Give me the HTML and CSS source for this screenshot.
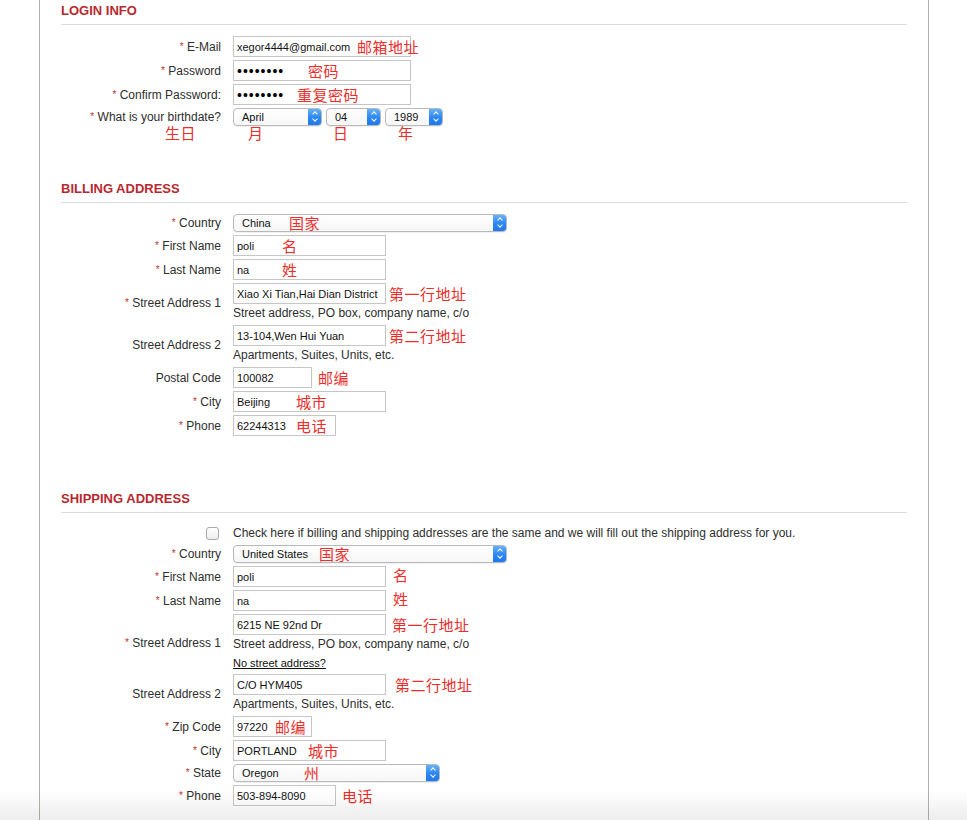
FILE: index.html
```html
<!DOCTYPE html>
<html lang="en">

<head>
    <meta charset="UTF-8">
    <meta name="viewport" content="width=device-width, initial-scale=1.0">
    <title>Account Registration</title>
    <link rel="stylesheet" href="styles.css">
</head>

<body>
    <div class="page">
        <form class="reg-form">
            <!-- 登录信息 -->
            <section class="section">
                <h2 class="section-title">LOGIN INFO</h2>
                <div class="row">
                    <label class="row-label"><em>*</em> E-Mail</label>
                    <div class="row-field">
                        <input class="text w-long" type="text" value="xegor4444@gmail.com">
                    </div>
                    <span class="note note-email">邮箱地址</span>
                </div>
                <div class="row">
                    <label class="row-label"><em>*</em> Password</label>
                    <div class="row-field">
                        <input class="text w-long" type="password" value="abcdefgh">
                    </div>
                    <span class="note note-pwd">密码</span>
                </div>
                <div class="row">
                    <label class="row-label"><em>*</em> Confirm Password:</label>
                    <div class="row-field">
                        <input class="text w-long" type="password" value="abcdefgh">
                    </div>
                    <span class="note note-pwd2">重复密码</span>
                </div>
                <div class="row row-select">
                    <label class="row-label"><em>*</em> What is your birthdate?</label>
                    <div class="row-field birth">
                        <div class="select w-month">
                            <select><option>April</option></select>
                            <span class="select-btn"></span>
                        </div>
                        <div class="select w-day">
                            <select><option>04</option></select>
                            <span class="select-btn"></span>
                        </div>
                        <div class="select w-year">
                            <select><option>1989</option></select>
                            <span class="select-btn"></span>
                        </div>
                    </div>
                    <span class="note note-birth">生日</span>
                    <span class="note note-month">月</span>
                    <span class="note note-day">日</span>
                    <span class="note note-year">年</span>
                </div>
            </section>

            <!-- 账单地址 -->
            <section class="section">
                <h2 class="section-title">BILLING ADDRESS</h2>
                <div class="row row-select">
                    <label class="row-label"><em>*</em> Country</label>
                    <div class="row-field">
                        <div class="select w-country">
                            <select><option>China</option></select>
                            <span class="select-btn"></span>
                        </div>
                    </div>
                    <span class="note note-b-country">国家</span>
                </div>
                <div class="row">
                    <label class="row-label"><em>*</em> First Name</label>
                    <div class="row-field"><input class="text w-mid" type="text" value="poli"></div>
                    <span class="note note-b-name">名</span>
                </div>
                <div class="row">
                    <label class="row-label"><em>*</em> Last Name</label>
                    <div class="row-field"><input class="text w-mid" type="text" value="na"></div>
                    <span class="note note-b-name">姓</span>
                </div>
                <div class="row">
                    <label class="row-label"><em>*</em> Street Address 1</label>
                    <div class="row-field">
                        <input class="text w-mid" type="text" value="Xiao Xi Tian,Hai Dian District">
                        <p class="hint">Street address, PO box, company name, c/o</p>
                    </div>
                    <span class="note note-b-street">第一行地址</span>
                </div>
                <div class="row">
                    <label class="row-label">Street Address 2</label>
                    <div class="row-field">
                        <input class="text w-mid" type="text" value="13-104,Wen Hui Yuan">
                        <p class="hint">Apartments, Suites, Units, etc.</p>
                    </div>
                    <span class="note note-b-street">第二行地址</span>
                </div>
                <div class="row">
                    <label class="row-label">Postal Code</label>
                    <div class="row-field"><input class="text w-zip" type="text" value="100082"></div>
                    <span class="note note-b-zip">邮编</span>
                </div>
                <div class="row">
                    <label class="row-label"><em>*</em> City</label>
                    <div class="row-field"><input class="text w-mid" type="text" value="Beijing"></div>
                    <span class="note note-b-city">城市</span>
                </div>
                <div class="row">
                    <label class="row-label"><em>*</em> Phone</label>
                    <div class="row-field"><input class="text w-phone" type="text" value="62244313"></div>
                    <span class="note note-b-city">电话</span>
                </div>
            </section>

            <!-- 收货地址 -->
            <section class="section">
                <h2 class="section-title">SHIPPING ADDRESS</h2>
                <div class="row row-check">
                    <div class="row-label"><input class="check" type="checkbox" id="same_addr"></div>
                    <label class="row-field check-text" for="same_addr">Check here if billing and shipping addresses are the same and we will fill out the shipping address for you.</label>
                </div>
                <div class="row row-select">
                    <label class="row-label"><em>*</em> Country</label>
                    <div class="row-field">
                        <div class="select w-country">
                            <select><option>United States</option></select>
                            <span class="select-btn"></span>
                        </div>
                    </div>
                    <span class="note note-s-country">国家</span>
                </div>
                <div class="row">
                    <label class="row-label"><em>*</em> First Name</label>
                    <div class="row-field"><input class="text w-mid" type="text" value="poli"></div>
                    <span class="note note-s-name">名</span>
                </div>
                <div class="row">
                    <label class="row-label"><em>*</em> Last Name</label>
                    <div class="row-field"><input class="text w-mid" type="text" value="na"></div>
                    <span class="note note-s-name">姓</span>
                </div>
                <div class="row">
                    <label class="row-label"><em>*</em> Street Address 1</label>
                    <div class="row-field">
                        <input class="text w-mid" type="text" value="6215 NE 92nd Dr">
                        <p class="hint">Street address, PO box, company name, c/o</p>
                        <a class="no-street" href="#">No street address?</a>
                    </div>
                    <span class="note note-s-street1">第一行地址</span>
                </div>
                <div class="row">
                    <label class="row-label">Street Address 2</label>
                    <div class="row-field">
                        <input class="text w-mid" type="text" value="C/O HYM405">
                        <p class="hint">Apartments, Suites, Units, etc.</p>
                    </div>
                    <span class="note note-s-street2">第二行地址</span>
                </div>
                <div class="row">
                    <label class="row-label"><em>*</em> Zip Code</label>
                    <div class="row-field"><input class="text w-zip" type="text" value="97220"></div>
                    <span class="note note-s-zip">邮编</span>
                </div>
                <div class="row">
                    <label class="row-label"><em>*</em> City</label>
                    <div class="row-field"><input class="text w-mid" type="text" value="PORTLAND"></div>
                    <span class="note note-s-city">城市</span>
                </div>
                <div class="row row-select">
                    <label class="row-label"><em>*</em> State</label>
                    <div class="row-field">
                        <div class="select w-state">
                            <select><option>Oregon</option></select>
                            <span class="select-btn"></span>
                        </div>
                    </div>
                    <span class="note note-s-state">州</span>
                </div>
                <div class="row">
                    <label class="row-label"><em>*</em> Phone</label>
                    <div class="row-field"><input class="text w-phone" type="text" value="503-894-8090"></div>
                    <span class="note note-s-phone">电话</span>
                </div>
            </section>
        </form>
    </div>
    <div class="bottom-fade"></div>
</body>

</html>
```

FILE: styles.css
```css
* {
    margin: 0;
    padding: 0;
    box-sizing: border-box;
}

body {
    background-color: #fff;
    font-family: "Liberation Sans", Arial, sans-serif;
    font-size: 12px;
    color: #333;
}

.page {
    width: 890px;
    min-height: 820px;
    margin-left: 39px;
    padding: 0 21px;
    border-left: 1px solid #b3b1ac;
    border-right: 1px solid #b3b1ac;
}

/* 每一块 */
.section {
    margin-bottom: 52px;
}

.section-title {
    height: 25px;
    padding-top: 3px;
    font-size: 13px;
    line-height: 15px;
    font-weight: bold;
    color: #b8292f;
    border-bottom: 1px solid #dcdcdc;
    margin-bottom: 11px;
}

/* 表单行 */
.row {
    position: relative;
    display: grid;
    grid-template-columns: 160px auto;
    column-gap: 12px;
    align-items: center;
    margin-bottom: 3px;
}

.row-label {
    text-align: right;
    font-size: 12px;
    color: #2e2e2e;
}

.row-label em {
    font-style: normal;
    font-size: 10px;
    color: #c0322c;
    vertical-align: 1px;
}

.row-field {
    display: flex;
    flex-direction: column;
    align-items: flex-start;
}

.text {
    height: 21px;
    padding: 0 3px;
    border: 1px solid #c6c6c6;
    font-family: "Liberation Sans", Arial, sans-serif;
    font-size: 11px;
    color: #111;
    background: #fff;
    outline: none;
}

.text[type="password"] {
    font-size: 14px;
    letter-spacing: 1px;
    color: #000;
}

.w-long { width: 178px; }
.w-mid { width: 153px; }
.w-zip { width: 79px; }
.w-phone { width: 103px; }

.hint {
    line-height: 18px;
    font-size: 12px;
    color: #2e2e2e;
}

.no-street {
    margin-top: 2px;
    line-height: 16px;
    font-size: 11px;
    color: #111;
}

/* 下拉框 */
.select {
    position: relative;
    display: flex;
    height: 18px;
    border: 1px solid #b9b9b9;
    border-radius: 4px;
    background: linear-gradient(#fff, #f6f6f6);
    box-shadow: 0 1px 0 rgba(0, 0, 0, 0.06);
    overflow: hidden;
}

.select select {
    flex: 1;
    min-width: 0;
    appearance: none;
    -webkit-appearance: none;
    border: none;
    outline: none;
    background: transparent;
    padding-left: 8px;
    font-family: "Liberation Sans", Arial, sans-serif;
    font-size: 11px;
    color: #111;
}

.select-btn {
    width: 14px;
    margin: -1px -1px -1px 0;
    background: linear-gradient(#6cb6fb, #2a86f2 55%, #1f77ea);
    border-radius: 0 4px 4px 0;
    position: relative;
}

.select-btn::before,
.select-btn::after {
    content: "";
    position: absolute;
    left: 5px;
    width: 3px;
    height: 3px;
    border-left: 1px solid #fff;
    border-top: 1px solid #fff;
}

.select-btn::before {
    top: 4px;
    transform: rotate(45deg);
}

.select-btn::after {
    top: 9px;
    transform: rotate(-135deg);
}

.row-select .row-field {
    height: 18px;
}

.birth {
    flex-direction: row;
    gap: 4px;
}

.w-month { width: 89px; }
.w-day { width: 55px; }
.w-year { width: 58px; }
.w-country { width: 274px; }
.w-state { width: 207px; }

/* 复选框 */
.row-check {
    height: 18px;
}

.row-check .row-label {
    display: flex;
    justify-content: flex-end;
    padding-right: 2px;
}

.check {
    appearance: none;
    -webkit-appearance: none;
    width: 13px;
    height: 13px;
    border: 1px solid #a9a9a9;
    border-radius: 3px;
    background: linear-gradient(#fff, #ededed);
}

.check-text {
    font-size: 12px;
    color: #2e2e2e;
}

/* 红字标注 */
.note {
    position: absolute;
    top: 0;
    line-height: 21px;
    font-family: "Noto Sans CJK SC", sans-serif;
    font-size: 15px;
    letter-spacing: 0.5px;
    color: #ec2d2a;
    white-space: nowrap;
    pointer-events: none;
}

.row-select .note {
    line-height: 18px;
}

.note-email { left: 296px; }
.note-pwd { left: 247px; }
.note-pwd2 { left: 236px; }
.row-select .note-birth,
.row-select .note-month,
.row-select .note-day,
.row-select .note-year {
    top: 16px;
}
.note-birth { left: 104px; }
.note-month { left: 187px; }
.note-day { left: 272px; }
.note-year { left: 337px; }

.note-b-country { left: 228px; }
.note-b-name { left: 221px; }
.note-b-street { left: 328px; }
.note-b-zip { left: 257px; }
.note-b-city { left: 235px; }

.note-s-country { left: 258px; }
.note-s-name { left: 332px; top: -2px; }
.note-s-street1 { left: 331px; }
.note-s-street2 { left: 334px; }
.note-s-zip { left: 214px; }
.note-s-city { left: 247px; }
.note-s-state { left: 243px; }
.note-s-phone { left: 281px; }

.bottom-fade {
    position: fixed;
    left: 0;
    right: 0;
    bottom: 0;
    height: 30px;
    background: linear-gradient(rgba(0, 0, 0, 0), rgba(0, 0, 0, 0.07));
    pointer-events: none;
}
```
